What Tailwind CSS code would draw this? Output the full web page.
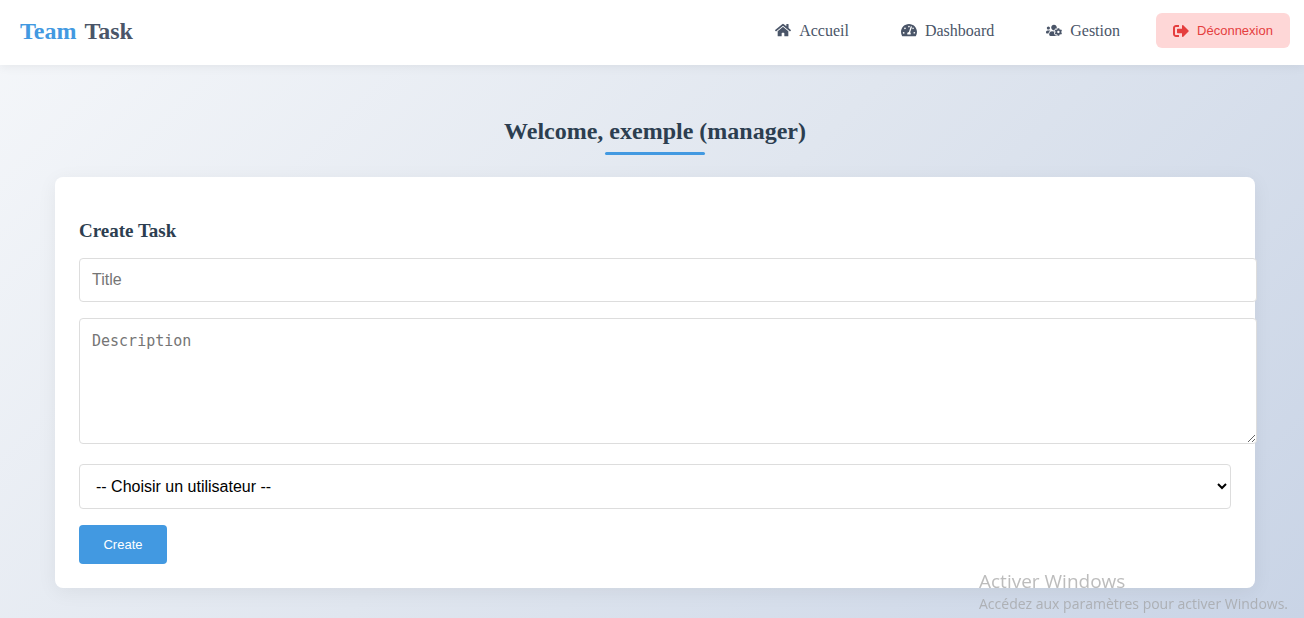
<!DOCTYPE html>
<html lang="fr">
<head>
<meta charset="utf-8">
<title>Team Task</title>
<script src="https://cdn.jsdelivr.net/npm/@tailwindcss/browser@4"></script>
</head>
<body class="flex min-h-screen flex-col overflow-x-hidden bg-linear-135 from-[#f5f7fa] via-[#e0e6ef] to-[#c9d4e6] font-['Liberation_Serif',serif] text-[#2c3e50]">
<header class="flex items-start justify-between bg-white pt-[13px] pr-[14px] pb-[17px] pl-5 shadow-[0_2px_10px_rgba(0,0,0,0.06)]">
  <a href="#" class="flex h-[35px] items-center gap-2 text-2xl font-bold text-[#4a5568]"><span class="text-[#4299e1]">Team</span><span>Task</span></a>
  <nav class="flex items-center gap-5 text-base text-[#4a5568]">
    <a href="#" class="flex items-center gap-2 px-4">
      <svg class="w-4" viewBox="0 0 576 512" fill="currentColor" aria-hidden="true"><path d="M280.37 148.26L96 300.11V464a16 16 0 0 0 16 16l112.06-.29a16 16 0 0 0 15.92-16V368a16 16 0 0 1 16-16h64a16 16 0 0 1 16 16v95.64a16 16 0 0 0 16 16.05L464 480a16 16 0 0 0 16-16V300L295.67 148.26a12.19 12.19 0 0 0-15.3 0zM571.6 251.47L488 182.56V44.05a12 12 0 0 0-12-12h-56a12 12 0 0 0-12 12v72.61L318.47 43a48 48 0 0 0-61 0L4.34 251.47a12 12 0 0 0-1.6 16.9l25.5 31A12 12 0 0 0 45.15 301l235.22-193.74a12.19 12.19 0 0 1 15.3 0L530.9 301a12 12 0 0 0 16.9-1.6l25.5-31a12 12 0 0 0-1.7-16.93z"/></svg>
      Accueil</a>
    <a href="#" class="flex items-center gap-2 px-4">
      <svg class="w-4" viewBox="0 0 576 512" fill="currentColor" aria-hidden="true"><path d="M288 32C128.94 32 0 160.94 0 320c0 52.8 14.25 102.26 39.06 144.8 5.61 9.62 16.3 15.2 27.44 15.2h443c11.14 0 21.83-5.58 27.44-15.2C561.75 422.26 576 372.8 576 320c0-159.06-128.94-288-288-288zm0 64c14.71 0 26.58 10.13 30.32 23.65-1.11 2.26-2.64 4.23-3.45 6.67l-9.22 27.67c-5.13 3.49-10.97 6.01-17.64 6.01-17.67 0-32-14.33-32-32S270.33 96 288 96zM96 384c-17.67 0-32-14.33-32-32s14.33-32 32-32 32 14.33 32 32-14.33 32-32 32zm48-160c-17.67 0-32-14.33-32-32s14.33-32 32-32 32 14.33 32 32-14.33 32-32 32zm246.77-72.41l-61.33 184C343.13 347.33 352 364.54 352 384c0 11.72-3.38 22.55-8.88 32H232.88c-5.5-9.45-8.88-20.28-8.88-32 0-33.94 26.5-61.43 59.9-63.59l61.34-184.01c4.17-12.56 17.73-19.45 30.36-15.17 12.57 4.19 19.35 17.79 15.17 30.36zm14.66 57.2l15.52-46.55c3.47-1.29 7.13-2.23 11.05-2.23 17.67 0 32 14.33 32 32s-14.33 32-32 32c-11.38-.01-20.89-6.28-26.57-15.22zM480 384c-17.67 0-32-14.33-32-32s14.33-32 32-32 32 14.33 32 32-14.33 32-32 32z"/></svg>
      Dashboard</a>
    <a href="#" class="flex items-center gap-2 px-4">
      <svg class="w-4" viewBox="0 0 640 512" fill="currentColor" aria-hidden="true"><path d="M610.5 341.6c2.6-14.1 2.6-28.5 0-42.6l25.8-14.9c3-1.7 4.3-5.2 3.3-8.5-6.7-21.6-18.2-41.2-33.2-57.4-2.3-2.5-6-3.1-9-1.4l-25.8 14.9c-10.9-9.3-23.4-16.5-36.9-21.3v-29.8c0-3.4-2.4-6.4-5.7-7.1-22.3-5-45-4.8-66.2 0-3.3.7-5.7 3.7-5.7 7.1v29.8c-13.5 4.8-26 12-36.9 21.3l-25.8-14.9c-2.9-1.7-6.7-1.1-9 1.4-15 16.2-26.5 35.8-33.2 57.4-1 3.3.4 6.8 3.3 8.5l25.8 14.9c-2.6 14.1-2.6 28.5 0 42.6l-25.8 14.9c-3 1.7-4.3 5.2-3.3 8.5 6.7 21.6 18.2 41.1 33.2 57.4 2.3 2.5 6 3.1 9 1.4l25.8-14.9c10.9 9.3 23.4 16.5 36.9 21.3v29.8c0 3.4 2.4 6.4 5.7 7.1 22.3 5 45 4.8 66.2 0 3.3-.7 5.7-3.7 5.7-7.1v-29.8c13.5-4.8 26-12 36.9-21.3l25.8 14.9c2.9 1.7 6.7 1.1 9-1.4 15-16.2 26.5-35.8 33.2-57.4 1-3.3-.4-6.8-3.3-8.5l-25.8-14.9zM496 368.5c-26.8 0-48.5-21.8-48.5-48.5s21.8-48.5 48.5-48.5 48.5 21.8 48.5 48.5-21.7 48.5-48.5 48.5zM96 224c35.3 0 64-28.7 64-64s-28.7-64-64-64-64 28.7-64 64 28.7 64 64 64zm224 32c1.9 0 3.7-.5 5.6-.6 8.3-21.7 20.5-42.1 36.3-59.2 7.4-8 17.9-12.6 28.9-12.6 6.9 0 13.7 1.8 19.6 5.3l7.9 4.6c.8-.5 1.6-.9 2.4-1.4 7-14.6 11.2-30.8 11.2-48 0-61.9-50.1-112-112-112S208 82.1 208 144c0 61.9 50.1 112 112 112zm105.2 194.5c-2.3-1.2-4.6-2.6-6.8-3.9-8.2 4.8-15.3 9.8-27.5 9.8-10.9 0-21.4-4.6-28.9-12.6-18.3-19.8-32.3-43.9-40.2-69.6-10.7-34.5 24.9-49.7 25.8-50.3-.1-2.6-.1-5.2 0-7.8l-7.9-4.6c-3.8-2.2-7-5-9.8-8.1-3.3.2-6.5.6-9.8.6-24.6 0-47.6-6-68.5-16h-8.3C179.6 288 128 339.6 128 403.2V432c0 26.5 21.5 48 48 48h255.4c-3.7-6-6.2-12.8-6.2-20.3v-9.2zM173.1 274.6C161.5 263.1 145.6 256 128 256H64c-35.3 0-64 28.7-64 64v32c0 17.7 14.3 32 32 32h65.9c6.3-47.4 34.9-87.3 75.2-109.4z"/></svg>
      Gestion</a>
    <button type="button" class="flex h-[35px] w-[134px] items-center justify-center gap-2 rounded-md bg-[#fed7d7] font-['Liberation_Sans',sans-serif] text-[13px] text-[#e53e3e]">
      <svg class="w-4" viewBox="0 0 512 512" fill="currentColor" aria-hidden="true"><path d="M497 273L329 441c-15 15-41 4.500-41-17v-96H152c-13.300 0-24-10.700-24-24v-96c0-13.300 10.700-24 24-24h136V88c0-21.400 25.900-32 41-17l168 168c9.300 9.400 9.300 24.600 0 34zM192 436v-40c0-6.600-5.400-12-12-12H96c-17.700 0-32-14.300-32-32V160c0-17.700 14.300-32 32-32h84c6.600 0 12-5.400 12-12V76c0-6.600-5.400-12-12-12H96c-53 0-96 43-96 96v192c0 53 43 96 96 96h84c6.600 0 12-5.400 12-12z"/></svg>
      Déconnexion</button>
  </nav>
</header>
<main class="pt-[50px] pb-[30px] pl-[6px]">
  <div class="mx-auto flex w-full max-w-[1200px] flex-col">
    <h1 class="text-center text-2xl font-bold">Welcome, exemple (manager)</h1>
    <div class="mx-auto mt-[5px] h-[3px] w-[100px] rounded-sm bg-[#4299e1]"></div>
    <form class="mt-[22px] rounded-lg bg-white px-6 pt-[42px] pb-6 shadow-[0_4px_20px_rgba(0,0,0,0.06)]">
      <h2 class="text-[19px] leading-6 font-bold">Create Task</h2>
      <input type="text" aria-label="Title" placeholder="Title" class="mt-[15px] box-content block h-[18px] w-full rounded border border-[#ddd] bg-white p-3 font-['Liberation_Sans',sans-serif] text-base placeholder:text-[#757575]">
      <textarea aria-label="Description" placeholder="Description" class="mt-4 box-content block h-[100px] w-full resize rounded border border-[#ddd] bg-white p-3 font-['DejaVu_Sans_Mono',monospace] text-[15px] leading-5 placeholder:text-[#757575]"></textarea>
      <select aria-label="Utilisateur" class="mt-5 block h-[45px] w-full rounded border border-[#ddd] bg-white px-3 font-['Liberation_Sans',sans-serif] text-base text-black">
        <option>-- Choisir un utilisateur --</option>
      </select>
      <button type="submit" class="mt-4 block h-[39px] w-[88px] rounded bg-[#4299e1] font-['Liberation_Sans',sans-serif] text-[13px] text-white">Create</button>
    </form>
  </div>
</main>
<div class="pointer-events-none fixed right-[12px] bottom-[3px] w-[313px] font-['Open_Sans',sans-serif] text-[#a0a0a0]/70">
  <p class="text-[19px] leading-6">Activer Windows</p>
  <p class="text-[14px] leading-[22px]">Accédez aux paramètres pour activer Windows.</p>
</div>
</body>
</html>
